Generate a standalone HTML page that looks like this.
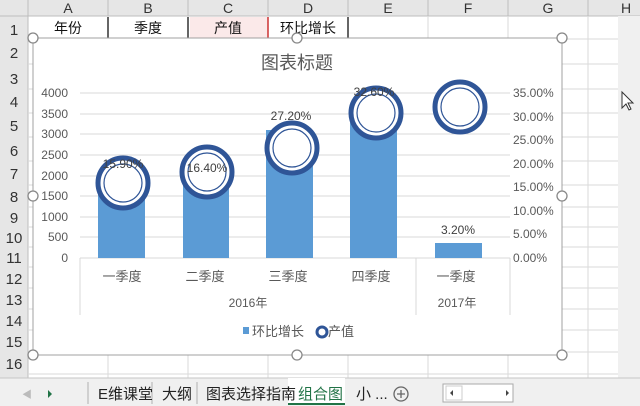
<!DOCTYPE html>
<html><head><meta charset="utf-8"><style>
body{margin:0;width:640px;height:406px;overflow:hidden;background:#fff;font-family:"Liberation Sans","Noto Sans CJK SC",sans-serif;position:relative}
svg{position:absolute;left:0;top:0}
</style></head><body>
<svg width="640" height="406" viewBox="0 0 640 406" font-family="Liberation Sans, Noto Sans CJK SC, sans-serif">
<rect x="0" y="0" width="640" height="16" fill="#e6e6e6"/>
<rect x="0" y="16" width="28" height="362" fill="#e6e6e6"/>
<line x1="0" y1="16" x2="640" y2="16" stroke="#bdbdbd"/>
<line x1="28" y1="0" x2="28" y2="378" stroke="#bdbdbd"/>
<g fill="#333" font-size="14" text-anchor="middle">
<text x="68" y="13">A</text><text x="148" y="13">B</text><text x="228" y="13">C</text><text x="308" y="13">D</text><text x="388" y="13">E</text><text x="468" y="13">F</text><text x="548" y="13">G</text><text x="626" y="13">H</text>
</g>
<g stroke="#bdbdbd">
<line x1="108" y1="0" x2="108" y2="16"/><line x1="188" y1="0" x2="188" y2="16"/><line x1="268" y1="0" x2="268" y2="16"/><line x1="348" y1="0" x2="348" y2="16"/><line x1="428" y1="0" x2="428" y2="16"/><line x1="508" y1="0" x2="508" y2="16"/><line x1="588" y1="0" x2="588" y2="16"/>
</g>
<g stroke="#dadada">
<line x1="108" y1="16" x2="108" y2="378"/><line x1="188" y1="16" x2="188" y2="378"/><line x1="268" y1="16" x2="268" y2="378"/><line x1="348" y1="16" x2="348" y2="378"/><line x1="428" y1="16" x2="428" y2="378"/><line x1="508" y1="16" x2="508" y2="378"/><line x1="588" y1="16" x2="588" y2="378"/>
<line x1="28" y1="39" x2="618" y2="39"/><line x1="28" y1="64" x2="618" y2="64"/><line x1="28" y1="89" x2="618" y2="89"/><line x1="28" y1="113" x2="618" y2="113"/><line x1="28" y1="137" x2="618" y2="137"/><line x1="28" y1="161" x2="618" y2="161"/><line x1="28" y1="185" x2="618" y2="185"/><line x1="28" y1="207" x2="618" y2="207"/><line x1="28" y1="227" x2="618" y2="227"/><line x1="28" y1="247" x2="618" y2="247"/><line x1="28" y1="267" x2="618" y2="267"/><line x1="28" y1="288" x2="618" y2="288"/><line x1="28" y1="309" x2="618" y2="309"/><line x1="28" y1="330" x2="618" y2="330"/><line x1="28" y1="352" x2="618" y2="352"/><line x1="28" y1="374" x2="618" y2="374"/>
</g>
<g fill="#333" font-size="15" text-anchor="middle">
<text x="14" y="35">1</text><text x="14" y="58">2</text><text x="14" y="84">3</text><text x="14" y="107">4</text><text x="14" y="131">5</text><text x="14" y="156">6</text><text x="14" y="179">7</text><text x="14" y="202">8</text><text x="14" y="223">9</text><text x="14" y="243">10</text><text x="14" y="263">11</text><text x="14" y="284">12</text><text x="14" y="305">13</text><text x="14" y="326">14</text><text x="14" y="347">15</text><text x="14" y="369">16</text><text x="14" y="388">17</text>
</g>
<rect x="190" y="17" width="78" height="21" fill="#fbe9e9"/>
<g stroke="#333" stroke-width="1.5"><line x1="108" y1="17" x2="108" y2="38"/><line x1="188" y1="17" x2="188" y2="38"/><line x1="348" y1="17" x2="348" y2="38"/></g>
<line x1="268" y1="17" x2="268" y2="38" stroke="#c33" stroke-width="1.5"/>
<g fill="#111" font-size="14" text-anchor="middle">
<text x="68" y="33">年份</text><text x="148" y="33">季度</text><text x="228" y="33">产值</text><text x="308" y="33">环比增长</text>
</g>
<rect x="618" y="16" width="22" height="362" fill="#f0f0f0"/>
<path d="M622 92 l0 16 l4 -4 l3 6 l2 -1 l-3 -6 l5 0 z" fill="#fff" stroke="#333"/>
<rect x="33" y="38" width="529" height="317" fill="#fff" stroke="#a0a0a0"/>
<text x="297" y="69" font-size="18" fill="#595959" text-anchor="middle">图表标题</text>
<g stroke="#d9d9d9">
<line x1="80" y1="93" x2="510" y2="93"/><line x1="80" y1="114" x2="510" y2="114"/><line x1="80" y1="134" x2="510" y2="134"/><line x1="80" y1="155" x2="510" y2="155"/><line x1="80" y1="176" x2="510" y2="176"/><line x1="80" y1="196" x2="510" y2="196"/><line x1="80" y1="217" x2="510" y2="217"/><line x1="80" y1="237" x2="510" y2="237"/><line x1="80" y1="258" x2="510" y2="258"/>
<line x1="80" y1="258" x2="80" y2="315"/><line x1="416" y1="258" x2="416" y2="315"/><line x1="510" y1="258" x2="510" y2="315"/>
</g>
<g fill="#595959" font-size="12" text-anchor="end">
<text x="68" y="97">4000</text><text x="68" y="118">3500</text><text x="68" y="138">3000</text><text x="68" y="159">2500</text><text x="68" y="180">2000</text><text x="68" y="200">1500</text><text x="68" y="221">1000</text><text x="68" y="241">500</text><text x="68" y="262">0</text>
</g>
<g fill="#595959" font-size="12" text-anchor="start">
<text x="513" y="97">35.00%</text><text x="513" y="121">30.00%</text><text x="513" y="144">25.00%</text><text x="513" y="168">20.00%</text><text x="513" y="191">15.00%</text><text x="513" y="215">10.00%</text><text x="513" y="238">5.00%</text><text x="513" y="262">0.00%</text>
</g>
<g fill="#5b9bd5">
<rect x="98" y="183" width="47" height="75"/><rect x="183" y="185" width="46" height="73"/><rect x="266" y="130" width="47" height="128"/><rect x="350" y="104" width="47" height="154"/><rect x="435" y="243" width="47" height="15"/>
</g>
<g fill="#fff" stroke="#2f5597">
<circle cx="123" cy="183" r="25" stroke-width="5"/><circle cx="123" cy="183" r="19" stroke-width="1.2"/>
<circle cx="207" cy="172" r="25" stroke-width="5"/><circle cx="207" cy="172" r="19" stroke-width="1.2"/>
<circle cx="292" cy="148" r="25" stroke-width="5"/><circle cx="292" cy="148" r="19" stroke-width="1.2"/>
<circle cx="376" cy="113" r="25" stroke-width="5"/><circle cx="376" cy="113" r="19" stroke-width="1.2"/>
<circle cx="460" cy="107" r="25" stroke-width="5"/><circle cx="460" cy="107" r="19" stroke-width="1.2"/>
</g>
<g fill="#404040" font-size="12" text-anchor="middle">
<text x="123" y="168">15.90%</text><text x="207" y="172">16.40%</text><text x="291" y="120">27.20%</text><text x="374" y="96">32.60%</text><text x="458" y="234">3.20%</text>
</g>
<g fill="#595959" font-size="13" text-anchor="middle">
<text x="122" y="281">一季度</text><text x="205" y="281">二季度</text><text x="288" y="281">三季度</text><text x="371" y="281">四季度</text><text x="456" y="281">一季度</text>
<text x="248" y="307" font-size="12">2016年</text><text x="457" y="307" font-size="12">2017年</text>
</g>
<rect x="243" y="327" width="6" height="7" fill="#5b9bd5"/>
<text x="252" y="336" font-size="13" fill="#595959">环比增长</text>
<circle cx="322" cy="332" r="5" fill="#fff" stroke="#2f5597" stroke-width="3"/>
<text x="328" y="336" font-size="13" fill="#595959">产值</text>
<g fill="#fff" stroke="#888" stroke-width="1.3">
<circle cx="33" cy="38" r="5"/><circle cx="297" cy="38" r="5"/><circle cx="562" cy="38" r="5"/>
<circle cx="33" cy="196" r="5"/><circle cx="562" cy="196" r="5"/>
<circle cx="33" cy="355" r="5"/><circle cx="297" cy="355" r="5"/><circle cx="562" cy="355" r="5"/>
</g>
<rect x="0" y="378" width="640" height="28" fill="#f0f0f0"/>
<line x1="0" y1="378" x2="640" y2="378" stroke="#c6c6c6"/>
<text x="22" y="398" font-size="10" fill="#bbb">◀</text>
<path d="M48 390 l4 4 l-4 4 z" fill="#217346"/>
<g stroke="#b0b0b0"><line x1="88" y1="382" x2="88" y2="404"/><line x1="152" y1="382" x2="152" y2="404"/><line x1="197" y1="382" x2="197" y2="404"/></g>
<rect x="288" y="378" width="57" height="26" fill="#fff"/>
<line x1="288" y1="404" x2="345" y2="404" stroke="#217346" stroke-width="2"/>
<g font-size="15" fill="#222">
<text x="98" y="399">E维课堂</text><text x="162" y="399">大纲</text><text x="206" y="399">图表选择指南</text><text x="298" y="399" fill="#217346">组合图</text><text x="356" y="399">小 ...</text>
</g>
<circle cx="401" cy="394" r="7" fill="none" stroke="#666" stroke-width="1.3"/>
<path d="M397 394 h8 M401 390 v8" stroke="#666" stroke-width="1.3"/>
<rect x="443" y="384" width="70" height="18" fill="#fff" stroke="#aaa"/>
<rect x="446" y="386" width="16" height="14" fill="#fff" stroke="#ccc"/>
<path d="M453 390 l-3 3 l3 3z" fill="#444"/>
<path d="M506 390 l3 3 l-3 3z" fill="#444"/>
</svg>
</body></html>
